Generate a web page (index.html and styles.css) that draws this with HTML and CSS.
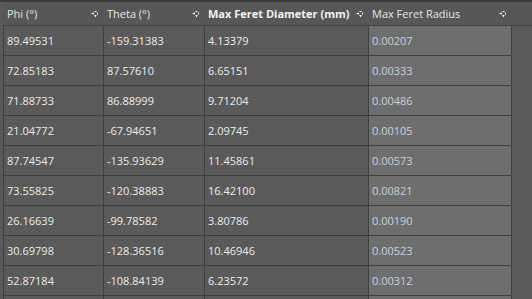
FILE: index.html
```html
<!DOCTYPE html>
<html>
<head>
<meta charset="utf-8">
<link rel="stylesheet" href="styles.css">
</head>
<body>
<div class="topstrip"></div>
<div class="grid">
  <div class="hcell first"><span>Phi (°)</span><svg class="pin" viewBox="0 0 8 8" width="8" height="8"><path d="M0.5 3.5H2.5M3.5 1.5H5.5M2.5 2.5V4.5M6.5 2.5V4.5M3.5 5.5H5.5M4.5 5.5V7" stroke="#f2f2f2" stroke-width="1" fill="none"/></svg></div>
  <div class="hcell"><span>Theta (°)</span><svg class="pin" viewBox="0 0 8 8" width="8" height="8"><path d="M0.5 3.5H2.5M3.5 1.5H5.5M2.5 2.5V4.5M6.5 2.5V4.5M3.5 5.5H5.5M4.5 5.5V7" stroke="#f2f2f2" stroke-width="1" fill="none"/></svg></div>
  <div class="hcell bold"><span>Max Feret Diameter (mm)</span><svg class="pin" viewBox="0 0 8 8" width="8" height="8"><path d="M0.5 3.5H2.5M3.5 1.5H5.5M2.5 2.5V4.5M6.5 2.5V4.5M3.5 5.5H5.5M4.5 5.5V7" stroke="#f2f2f2" stroke-width="1" fill="none"/></svg></div>
  <div class="hcell"><span>Max Feret Radius</span><svg class="pin" viewBox="0 0 8 8" width="8" height="8"><path d="M0.5 3.5H2.5M3.5 1.5H5.5M2.5 2.5V4.5M6.5 2.5V4.5M3.5 5.5H5.5M4.5 5.5V7" stroke="#f2f2f2" stroke-width="1" fill="none"/></svg></div>
  <div class="hcell rest"></div>

  <div class="cell first">89.49531</div><div class="cell">-159.31383</div><div class="cell">4.13379</div><div class="cell sel">0.00207</div><div class="cell rest"></div>
  <div class="cell first">72.85183</div><div class="cell">87.57610</div><div class="cell">6.65151</div><div class="cell sel">0.00333</div><div class="cell rest"></div>
  <div class="cell first">71.88733</div><div class="cell">86.88999</div><div class="cell">9.71204</div><div class="cell sel">0.00486</div><div class="cell rest"></div>
  <div class="cell first">21.04772</div><div class="cell">-67.94651</div><div class="cell">2.09745</div><div class="cell sel">0.00105</div><div class="cell rest"></div>
  <div class="cell first">87.74547</div><div class="cell">-135.93629</div><div class="cell">11.45861</div><div class="cell sel">0.00573</div><div class="cell rest"></div>
  <div class="cell first">73.55825</div><div class="cell">-120.38883</div><div class="cell">16.42100</div><div class="cell sel">0.00821</div><div class="cell rest"></div>
  <div class="cell first">26.16639</div><div class="cell">-99.78582</div><div class="cell">3.80786</div><div class="cell sel">0.00190</div><div class="cell rest"></div>
  <div class="cell first">30.69798</div><div class="cell">-128.36516</div><div class="cell">10.46946</div><div class="cell sel">0.00523</div><div class="cell rest"></div>
  <div class="cell first">52.87184</div><div class="cell">-108.84139</div><div class="cell">6.23572</div><div class="cell sel">0.00312</div><div class="cell rest"></div>
  <div class="cell first"></div><div class="cell"></div><div class="cell"></div><div class="cell sel"></div><div class="cell rest"></div>
</div>
</body>
</html>
```

FILE: styles.css
```css
html, body {
  margin: 0;
  padding: 0;
  background: #5a5a5a;
  overflow: hidden;
  width: 532px;
  height: 299px;
}
body {
  font-family: "Open Sans", "Noto Sans", sans-serif;
  font-size: 11px;
  color: #ececec;
}
.topstrip {
  height: 2px;
  background: #3c3c3c;
}
.grid {
  display: grid;
  grid-template-columns: 3px 100px 101px 164px 143px 1fr;
  grid-auto-rows: 30px;
  grid-template-rows: 24px;
}
.hcell {
  background: #575757;
  border-bottom: 1px solid #424242;
  display: flex;
  align-items: center;
  justify-content: space-between;
  padding: 0 4px 0 4px;
  height: 23px;
  box-sizing: content-box;
  color: #e6e6e6;
}
.hcell.first { grid-column: 2; }
.hcell.rest { padding: 0; }
.bold { font-weight: 700; color: #f4f4f4; }
.pin { display: block; flex: none; }
.cell {
  border-left: 1px solid #3f3f3f;
  border-bottom: 1px solid #3f3f3f;
  display: flex;
  align-items: center;
  padding-left: 3px;
  height: 29px;
  box-sizing: content-box;
  white-space: nowrap;
}
.cell.first { grid-column: 2; }
.sel {
  background: #6e6e6e;
  color: #c9d0da;
}
.cell.rest { border-bottom: none; padding: 0; }
```
